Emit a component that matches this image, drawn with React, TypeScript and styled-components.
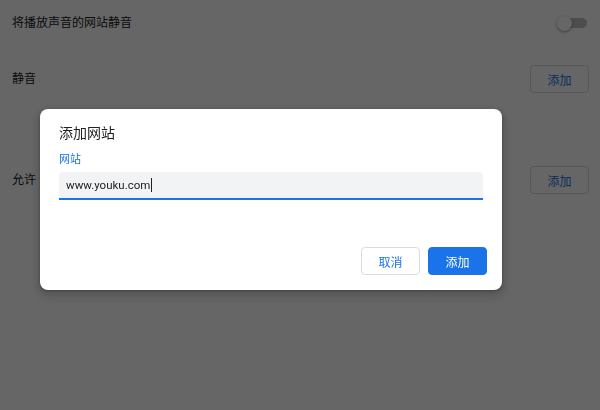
import React from "react";
import styled, { createGlobalStyle } from "styled-components";

const GlobalStyle = createGlobalStyle`
  html, body {
    margin: 0;
    padding: 0;
    width: 600px;
    height: 410px;
    overflow: hidden;
    background: #ffffff;
    font-family: Roboto, "Noto Sans CJK SC", "Noto Sans", sans-serif;
    color: #202124;
  }
  * { box-sizing: border-box; }
`;

const Page = styled.div`
  width: 600px;
  height: 410px;
  padding: 0 11px 0 12px;
  display: flex;
  flex-direction: column;
`;

const Row = styled.div<{ $height: number; $top?: number }>`
  display: flex;
  align-items: center;
  justify-content: space-between;
  height: ${(p) => p.$height}px;
  margin-top: ${(p) => p.$top ?? 0}px;
`;

const RowLabel = styled.span`
  font-size: 12px;
  line-height: 16px;
  color: #202124;
`;

const Toggle = styled.div`
  position: relative;
  width: 26px;
  height: 10px;
  margin-right: 2px;
  border-radius: 5px;
  background: #bdc1c6;
`;

const Knob = styled.div`
  position: absolute;
  left: -4px;
  top: -2.5px;
  width: 15px;
  height: 15px;
  border-radius: 50%;
  background: #ffffff;
  box-shadow: 0 1px 3px rgba(0, 0, 0, 0.4);
`;

const Button = styled.button<{ $primary?: boolean }>`
  height: 28px;
  min-width: 59px;
  padding: 0 12px;
  border-radius: 4px;
  font-family: Roboto, "Noto Sans CJK SC", sans-serif;
  font-size: 12px;
  cursor: pointer;
  border: 1px solid ${(p) => (p.$primary ? "#1a73e8" : "#dadce0")};
  background: ${(p) => (p.$primary ? "#1a73e8" : "#ffffff")};
  color: ${(p) => (p.$primary ? "#ffffff" : "#1a73e8")};
`;

const Overlay = styled.div`
  position: fixed;
  inset: 0;
  background: rgba(0, 0, 0, 0.6);
  display: flex;
  align-items: flex-start;
  padding: 109px 0 0 40px;
`;

const Dialog = styled.div`
  width: 462px;
  height: 181px;
  background: #ffffff;
  border-radius: 8px;
  box-shadow: 0 4px 8px 3px rgba(0, 0, 0, 0.15), 0 1px 3px rgba(0, 0, 0, 0.3);
  display: flex;
  flex-direction: column;
  padding: 14px 15px 15px 19px;
`;

const Title = styled.h2`
  margin: 0;
  font-size: 14px;
  line-height: 20px;
  font-weight: 400;
  color: #202124;
`;

const FieldLabel = styled.label`
  margin-top: 10px;
  font-size: 11px;
  line-height: 14px;
  color: #1a73e8;
`;

const Field = styled.div`
  margin-top: 5px;
  margin-right: 4px;
  height: 28px;
  background: #f1f3f4;
  border-radius: 4px 4px 0 0;
  border-bottom: 2px solid #1a73e8;
  display: flex;
  align-items: center;
  padding: 0 7px;
  font-family: Roboto, sans-serif;
  font-size: 11.5px;
  color: #202124;
`;

const Caret = styled.span`
  display: inline-block;
  width: 1px;
  height: 14px;
  margin-left: 1px;
  background: #202124;
`;

const Actions = styled.div`
  margin-top: auto;
  display: flex;
  justify-content: flex-end;
  gap: 8px;
`;

export default function App() {
  return (
    <>
      <GlobalStyle />
      <Page>
        <Row $height={46}>
          <RowLabel>将播放声音的网站静音</RowLabel>
          <Toggle>
            <Knob />
          </Toggle>
        </Row>
        <Row $height={36} $top={15}>
          <RowLabel>静音</RowLabel>
          <Button>添加</Button>
        </Row>
        <Row $height={36} $top={65}>
          <RowLabel>允许</RowLabel>
          <Button>添加</Button>
        </Row>
      </Page>
      <Overlay>
        <Dialog>
          <Title>添加网站</Title>
          <FieldLabel>网站</FieldLabel>
          <Field>
            www.youku.com
            <Caret />
          </Field>
          <Actions>
            <Button>取消</Button>
            <Button $primary>添加</Button>
          </Actions>
        </Dialog>
      </Overlay>
    </>
  );
}
